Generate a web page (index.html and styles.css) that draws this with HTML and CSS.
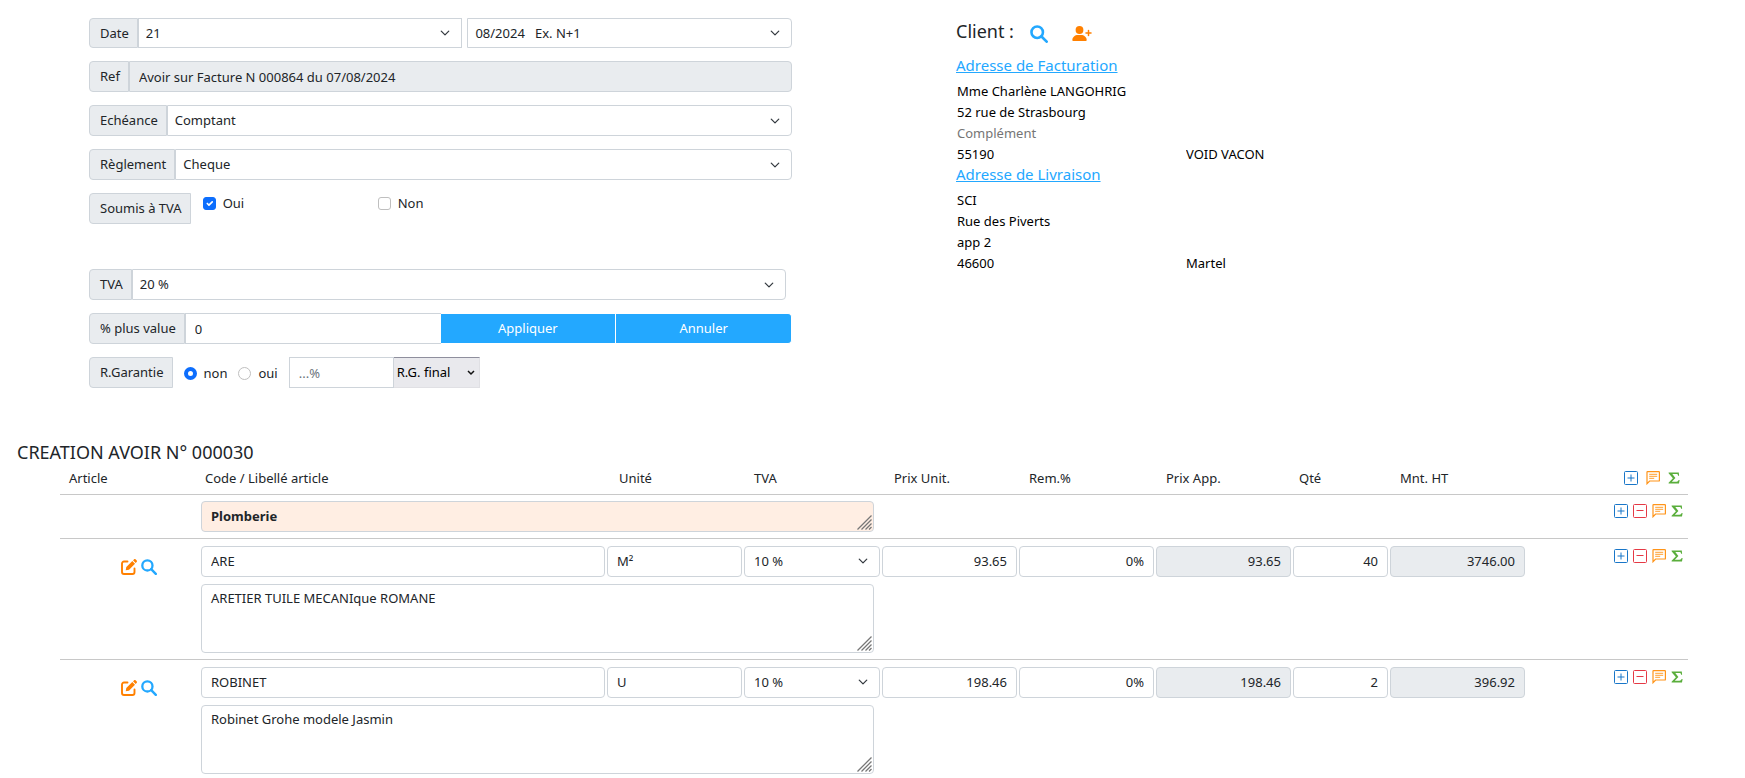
FILE: index.html
```html
<!DOCTYPE html>
<html lang="fr">
<head>
<meta charset="utf-8">
<title>Création avoir</title>
<link rel="stylesheet" href="styles.css">
</head>
<body>
<svg class="sprite" aria-hidden="true">
  <symbol id="i-search" viewBox="0 0 16 16"><circle cx="6.4" cy="6.4" r="5.1" fill="none" stroke="currentColor" stroke-width="2.3"/><path d="M10.2 10.2 14.8 14.8" stroke="currentColor" stroke-width="2.4" stroke-linecap="round"/></symbol>
  <symbol id="i-user" viewBox="0 0 20 16"><circle cx="7.5" cy="4" r="3.9" fill="currentColor"/><path d="M0.3 14.2C0.3 11 3 9 6 9h3c3 0 5.700 2 5.700 5.200 0 .5-.4.8-.9.8H1.200c-.5 0-.9-.3-.9-.8z" fill="currentColor"/><path d="M16.500 4.500v5M14 7h5" stroke="currentColor" stroke-width="1.500" stroke-linecap="round"/></symbol>
  <symbol id="i-edit" viewBox="0 0 16 16"><path d="M6.500 2.500H3A2 2 0 0 0 1 4.500V13a2 2 0 0 0 2 2h8.500a2 2 0 0 0 2-2V9.500" fill="none" stroke="currentColor" stroke-width="1.900" stroke-linecap="round"/><path d="M11.300 2 14 4.700 8 10.700 4.700 11.300 5.300 8z" fill="currentColor"/><path d="M12 1.300 13 .4c.5-.5 1.200-.5 1.700 0l.9.9c.5.5.5 1.200 0 1.700L14.700 4z" fill="currentColor"/></symbol>
  <symbol id="i-plus" viewBox="0 0 14 14"><rect x=".5" y=".5" width="13" height="13" rx="1" fill="none" stroke="currentColor"/><path d="M7 3.500v7M3.500 7h7" stroke="currentColor"/></symbol>
  <symbol id="i-minus" viewBox="0 0 14 14"><rect x=".5" y=".5" width="13" height="13" rx="1" fill="none" stroke="currentColor"/><path d="M3.500 6.500h7" stroke="currentColor"/></symbol>
  <symbol id="i-note" viewBox="0 0 14 14"><path d="M1 12.700V1.200C1 .8 1.200.6 1.600.6h11.200c.4 0 .6.2.6.6v8.200c0 .4-.2.6-.6.6H3.600z" fill="none" stroke="currentColor" stroke-width="1.200"/><path d="M3.200 3.300h8M3.200 5.300h8M3.200 7.300h5" stroke="currentColor" stroke-width=".9"/></symbol>
  <symbol id="i-sum" viewBox="0 0 12 12"><path d="M.6.5h10.200l.3 3.200h-1c-.2-1.200-.7-1.600-2-1.600H4.300L7.400 6 3.800 9.700h4.600c1.300 0 1.800-.5 2.200-1.700h1l-.6 3.500H.6v-.8L4.900 6.300.6 1.300z" fill="currentColor"/></symbol>
  <symbol id="i-grip" viewBox="0 0 15 15"><path d="M.5 14.500l14-14M4.500 14.500l10-10M8.500 14.500l6-6M12 14.500l2.500-2.500" stroke="#777" stroke-width="1.300"/></symbol>
</svg>

<main>
  <div class="top">
    <form class="form">
      <div class="group group-date">
        <label class="tag" for="day">Date</label>
        <select class="field select" id="day"><option>21</option></select>
        <select class="field select month" aria-label="Mois"><option>08/2024 &nbsp; Ex. N+1</option></select>
      </div>
      <div class="group">
        <label class="tag" for="ref">Ref</label>
        <input class="field locked" id="ref" value="Avoir sur Facture N 000864 du 07/08/2024" readonly>
      </div>
      <div class="group">
        <label class="tag" for="term">Echéance</label>
        <select class="field select" id="term"><option>Comptant</option></select>
      </div>
      <div class="group">
        <label class="tag" for="pay">Règlement</label>
        <select class="field select" id="pay"><option>Cheque</option></select>
      </div>
      <div class="group group-tax">
        <span class="tag">Soumis à TVA</span>
        <label class="choice"><input type="checkbox" checked>Oui</label>
        <label class="choice"><input type="checkbox">Non</label>
      </div>
      <div class="group group-rate">
        <label class="tag" for="vat">TVA</label>
        <select class="field select" id="vat"><option>20 %</option></select>
      </div>
      <div class="group group-gain">
        <label class="tag" for="gain">% plus value</label>
        <input class="field" id="gain" value="0">
        <button class="btn" type="button">Appliquer</button>
        <button class="btn" type="button">Annuler</button>
      </div>
      <div class="group group-hold">
        <span class="tag">R.Garantie</span>
        <label class="choice"><input type="radio" name="hold" checked>non</label>
        <label class="choice"><input type="radio" name="hold">oui</label>
        <input class="field percent" placeholder="...%" aria-label="Pourcentage">
        <select class="plain" aria-label="Type de garantie"><option>R.G. final</option></select>
      </div>
    </form>

    <section class="client">
      <h2 class="heading">Client :
        <button class="icon-btn blue" type="button" aria-label="Rechercher"><svg class="ic-l"><use href="#i-search"/></svg></button>
        <button class="icon-btn orange" type="button" aria-label="Ajouter un client"><svg class="ic-user"><use href="#i-user"/></svg></button>
      </h2>
      <a class="link" href="#">Adresse de Facturation</a>
      <div class="address">
        <input class="wide" aria-label="Nom" value="Mme Charlène LANGOHRIG">
        <input class="wide" aria-label="Rue" value="52 rue de Strasbourg">
        <input class="wide" aria-label="Complément" placeholder="Complément">
        <input aria-label="Code postal" value="55190">
        <input aria-label="Ville" value="VOID VACON">
      </div>
      <a class="link" href="#">Adresse de Livraison</a>
      <div class="address">
        <input class="wide" aria-label="Nom" value="SCI">
        <input class="wide" aria-label="Rue" value="Rue des Piverts">
        <input class="wide" aria-label="Complément" value="app 2">
        <input aria-label="Code postal" value="46600">
        <input aria-label="Ville" value="Martel">
      </div>
    </section>
  </div>

  <h1 class="heading title">CREATION AVOIR N° 000030</h1>
  <table class="lines">
    <colgroup><col class="c-art"><col class="c-code"><col class="c-std"><col class="c-vat"><col class="c-std"><col class="c-std"><col class="c-std"><col class="c-qty"><col class="c-std"><col class="c-act"></colgroup>
    <thead>
      <tr>
        <th class="h-art">Article</th><th class="h-code">Code / Libellé article</th><th class="h-unit">Unité</th><th>TVA</th><th class="h-unit">Prix Unit.</th><th>Rem.%</th><th>Prix App.</th><th class="h-qty">Qté</th><th>Mnt. HT</th>
        <td><div class="actions head">
          <button class="icon-btn plus" type="button" aria-label="Ajouter"><svg class="ic"><use href="#i-plus"/></svg></button>
          <button class="icon-btn note" type="button" aria-label="Note"><svg class="ic"><use href="#i-note"/></svg></button>
          <button class="icon-btn sum" type="button" aria-label="Total"><svg class="ic-s"><use href="#i-sum"/></svg></button>
        </div></td>
      </tr>
    </thead>
    <tbody class="section">
      <tr>
        <td></td>
        <td colspan="3"><div class="memo"><textarea class="field lot" rows="1" aria-label="Lot">Plomberie</textarea><svg class="grip"><use href="#i-grip"/></svg></div></td>
        <td colspan="5"></td>
        <td><div class="actions">
          <button class="icon-btn plus" type="button" aria-label="Ajouter"><svg class="ic"><use href="#i-plus"/></svg></button>
          <button class="icon-btn minus" type="button" aria-label="Supprimer"><svg class="ic"><use href="#i-minus"/></svg></button>
          <button class="icon-btn note" type="button" aria-label="Note"><svg class="ic"><use href="#i-note"/></svg></button>
          <button class="icon-btn sum" type="button" aria-label="Total"><svg class="ic-s"><use href="#i-sum"/></svg></button>
        </div></td>
      </tr>
    </tbody>
    <tbody class="item">
      <tr>
        <td><div class="tools">
          <button class="icon-btn orange" type="button" aria-label="Modifier"><svg class="ic-m"><use href="#i-edit"/></svg></button>
          <button class="icon-btn blue" type="button" aria-label="Rechercher"><svg class="ic-m"><use href="#i-search"/></svg></button>
        </div></td>
        <td><input class="field" aria-label="Code" value="ARE"></td>
        <td><input class="field" aria-label="Unité" value="M²"></td>
        <td><select class="field select" aria-label="TVA"><option>10 %</option></select></td>
        <td><input class="field num" aria-label="Prix unitaire" value="93.65"></td>
        <td><input class="field num" aria-label="Remise" value="0%"></td>
        <td><input class="field num locked" aria-label="Prix appliqué" value="93.65" readonly></td>
        <td><input class="field num" aria-label="Quantité" value="40"></td>
        <td><input class="field num locked" aria-label="Montant HT" value="3746.00" readonly></td>
        <td><div class="actions">
          <button class="icon-btn plus" type="button" aria-label="Ajouter"><svg class="ic"><use href="#i-plus"/></svg></button>
          <button class="icon-btn minus" type="button" aria-label="Supprimer"><svg class="ic"><use href="#i-minus"/></svg></button>
          <button class="icon-btn note" type="button" aria-label="Note"><svg class="ic"><use href="#i-note"/></svg></button>
          <button class="icon-btn sum" type="button" aria-label="Total"><svg class="ic-s"><use href="#i-sum"/></svg></button>
        </div></td>
      </tr>
      <tr>
        <td></td>
        <td colspan="3"><div class="memo"><textarea class="field text" aria-label="Libellé">ARETIER TUILE MECANIque ROMANE</textarea><svg class="grip"><use href="#i-grip"/></svg></div></td>
        <td colspan="6"></td>
      </tr>
    </tbody>
    <tbody class="item">
      <tr>
        <td><div class="tools">
          <button class="icon-btn orange" type="button" aria-label="Modifier"><svg class="ic-m"><use href="#i-edit"/></svg></button>
          <button class="icon-btn blue" type="button" aria-label="Rechercher"><svg class="ic-m"><use href="#i-search"/></svg></button>
        </div></td>
        <td><input class="field" aria-label="Code" value="ROBINET"></td>
        <td><input class="field" aria-label="Unité" value="U"></td>
        <td><select class="field select" aria-label="TVA"><option>10 %</option></select></td>
        <td><input class="field num" aria-label="Prix unitaire" value="198.46"></td>
        <td><input class="field num" aria-label="Remise" value="0%"></td>
        <td><input class="field num locked" aria-label="Prix appliqué" value="198.46" readonly></td>
        <td><input class="field num" aria-label="Quantité" value="2"></td>
        <td><input class="field num locked" aria-label="Montant HT" value="396.92" readonly></td>
        <td><div class="actions">
          <button class="icon-btn plus" type="button" aria-label="Ajouter"><svg class="ic"><use href="#i-plus"/></svg></button>
          <button class="icon-btn minus" type="button" aria-label="Supprimer"><svg class="ic"><use href="#i-minus"/></svg></button>
          <button class="icon-btn note" type="button" aria-label="Note"><svg class="ic"><use href="#i-note"/></svg></button>
          <button class="icon-btn sum" type="button" aria-label="Total"><svg class="ic-s"><use href="#i-sum"/></svg></button>
        </div></td>
      </tr>
      <tr>
        <td></td>
        <td colspan="3"><div class="memo"><textarea class="field text" aria-label="Libellé">Robinet Grohe modele Jasmin</textarea><svg class="grip"><use href="#i-grip"/></svg></div></td>
        <td colspan="6"></td>
      </tr>
    </tbody>
  </table>
</main>
</body>
</html>
```
FILE: styles.css
```css
* { box-sizing: border-box; }
body, input, select, textarea, button {
  font-family: "Noto Sans", "Open Sans", sans-serif;
  font-size: 13px;
  line-height: 19px;
  color: #212529;
}
body { margin: 0; background: #fff; }
.sprite { position: absolute; width: 0; height: 0; }

/* header area */
.top {
  display: grid;
  grid-template-columns: 703fr 789fr;
  column-gap: 164px;
  padding: 18px 0 0 89px;
}
.form { display: flex; flex-direction: column; gap: 13px; }
.group { display: flex; height: 31px; }
.tag {
  flex: none;
  padding: 5px 8px 5px 10px;
  border: 1px solid #ced4da;
  border-radius: 4px 0 0 4px;
  background: #e9ecef;
  white-space: nowrap;
}
.field {
  display: block;
  width: 100%;
  min-width: 0;
  height: 31px;
  margin: 0;
  padding: 4px 9px;
  border: 1px solid #ced4da;
  border-radius: 4px;
  background-color: #fff;
}
.group .field { flex: 1; border-radius: 0 4px 4px 0; }
.locked { background-color: #e9ecef; }
.select {
  appearance: none;
  padding-right: 30px;
  background-image: url("data:image/svg+xml,%3csvg xmlns='http://www.w3.org/2000/svg' viewBox='0 0 16 16'%3e%3cpath fill='none' stroke='%23343a40' stroke-linecap='round' stroke-linejoin='round' stroke-width='2' d='m2 5 6 6 6-6'/%3e%3c/svg%3e");
  background-repeat: no-repeat;
  background-position: right 8px center;
  background-size: 16px 10px;
}
.group .select { padding-left: 7px; }
.group-date, .group-date .field { height: 30px; }
.group-date #day { border-radius: 0; }
.group-date .month { margin-left: 5px; border-radius: 0 4px 4px 0; }
.choice { display: flex; align-items: center; gap: 7px; height: 19px; }
.choice input {
  appearance: none;
  width: 13px;
  height: 13px;
  margin: 0;
  border: 1px solid #bfbfbf;
  border-radius: 3px;
  background: #fff center / 11px 11px no-repeat;
}
.choice input[type="radio"] { border-radius: 50%; }
.choice input[type="radio"]:checked { border: 4px solid #0d6efd; }
.choice input[type="checkbox"]:checked {
  border-color: #0d6efd;
  background-color: #0d6efd;
  background-image: url("data:image/svg+xml,%3csvg xmlns='http://www.w3.org/2000/svg' viewBox='0 0 20 20'%3e%3cpath fill='none' stroke='%23fff' stroke-linecap='round' stroke-linejoin='round' stroke-width='3' d='m6 10 3 3 6-6'/%3e%3c/svg%3e");
}
.group-tax { margin-bottom: 32px; }
.group-tax .choice { width: 175px; margin-top: 1px; }
.group-tax .tag { margin-right: 12px; }
.group-rate { margin-right: 6px; }
.group-gain #gain { border-right: 0; border-radius: 0; }
.btn {
  flex: none;
  width: 25%;
  padding: 0;
  border: 1px solid #fff;
  border-left-width: 0;
  background: #23a8ff;
  color: #fff;
}
.btn:last-child { border-radius: 0 4px 4px 0; }
.group-hold .choice { margin: 7px 0 0 11px; }
.group-hold .percent { flex: none; width: 105px; margin-left: 11px; border-radius: 0; }
.percent::placeholder { color: #6c757d; }
.plain {
  appearance: none;
  width: 86px;
  padding: 0 0 0 3px;
  border: 1px solid #e0e0e4;
  border-top-color: #8f8f9d;
  border-left: 0;
  border-radius: 0;
  background: #e9e9ed url("data:image/svg+xml,%3csvg xmlns='http://www.w3.org/2000/svg' viewBox='0 0 8 6'%3e%3cpath fill='none' stroke='%23111' stroke-width='1.500' d='m1 1 3 3 3-3'/%3e%3c/svg%3e") no-repeat right 4px center / 8px 6px;
  color: #000;
}

/* client */
.heading { margin: 0; font-size: 18px; font-weight: 400; line-height: 24px; }
.client .heading { display: flex; align-items: flex-end; padding-top: 1px; }
.client .blue { margin-left: 16px; }
.client .orange { margin-left: 24px; }
.link {
  display: block;
  margin: 0 0 4px;
  font-size: 15px;
  line-height: 21px;
  color: #23a8ff;
}
.heading + .link { margin-top: 12px; }
.address { display: grid; grid-template-columns: 229px 1fr; padding-left: 1px; }
.address input { width: 100%; height: 21px; padding: 0; border: 0; background: none; color: #000; }
.address input::placeholder { color: #757575; }
.address .wide { grid-column: 1 / -1; }

/* icons */
.icon-btn { display: block; padding: 0; border: 0; background: none; }
.icon-btn svg { display: block; }
.blue { color: #23a8ff; }
.orange { color: #ff8000; }
.plus { color: #1976c8; }
.minus { color: #e53945; }
.note { color: #ff9419; }
.sum { color: #5aae3c; }
.ic { width: 14px; height: 14px; }
.ic-s { width: 12px; height: 12px; }
.ic-m { width: 16px; height: 16px; }
.ic-l { width: 18px; height: 18px; }
.ic-user { width: 20px; height: 18px; }

/* lines */
.title { margin: 52px 0 0 17px; }
.lines {
  width: calc(100% - 117px);
  margin-left: 60px;
  border-collapse: collapse;
  table-layout: fixed;
}
.c-art { width: 141px; }
.c-code { width: 406px; }
.c-std { width: 137px; }
.c-vat { width: 138px; }
.c-qty { width: 97px; }
.c-act { width: 161px; }
.lines th { height: 30px; padding: 0 0 0 10px; font-weight: 400; text-align: left; }
.lines .h-art { padding-left: 9px; }
.lines .h-code { padding-left: 4px; }
.lines .h-unit { padding-left: 12px; }
.lines .h-qty { padding-left: 6px; }
.lines td { padding: 0 2px 0 0; vertical-align: top; }
.lines tbody { border-top: 1px solid #c8c8c8; }
.section td { padding-top: 6px; padding-bottom: 6px; }
.item tr:first-child td { padding-top: 7px; }
.item tr + tr td { padding-top: 7px; padding-bottom: 6px; }
.num { text-align: right; }
.memo { position: relative; margin-right: 6px; }
.memo textarea { resize: none; overflow: hidden; }
.memo .text { height: 69px; }
.memo .lot { padding-top: 5px; background: #ffeee3; font-weight: 700; }
.grip { position: absolute; right: 2px; bottom: 2px; width: 15px; height: 15px; }
.tools { display: flex; gap: 4px; padding: 13px 0 0 61px; }
.actions { display: flex; justify-content: flex-end; gap: 5px; padding: 3px 3px 0 0; }
.actions.head { gap: 8px; padding: 7px 6px 0 0; }
```
